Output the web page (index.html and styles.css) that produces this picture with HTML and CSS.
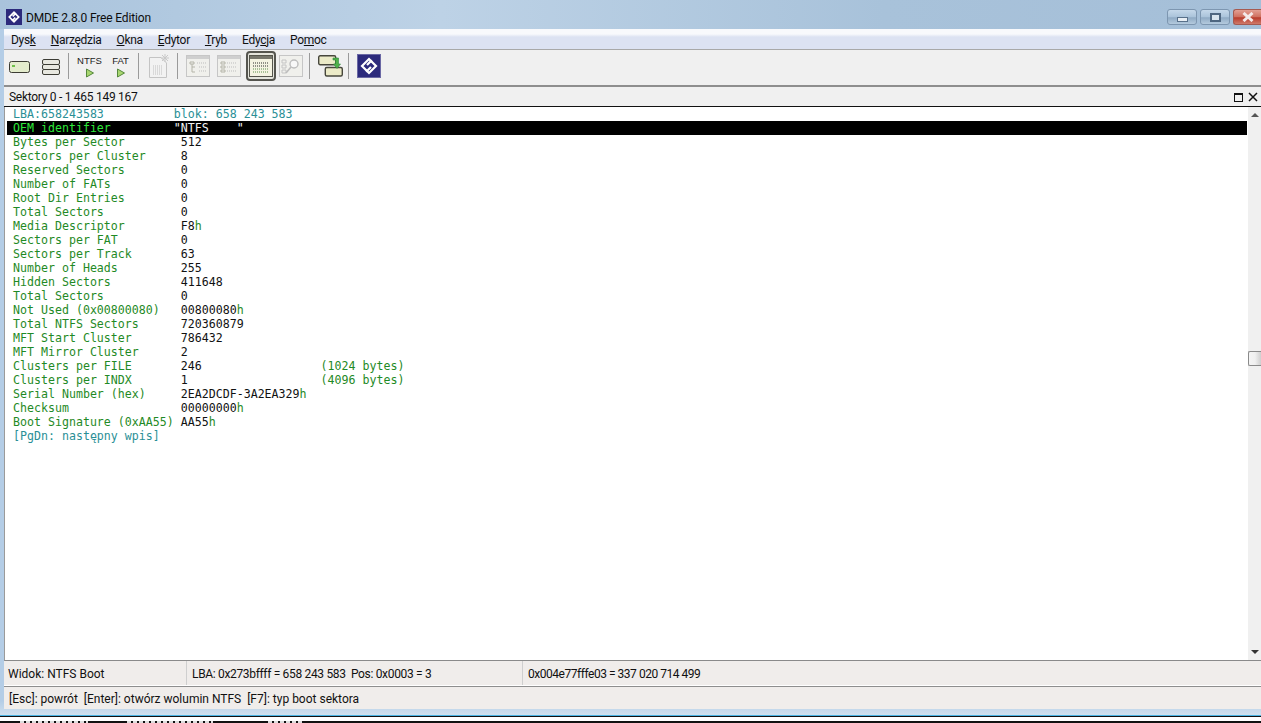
FILE: index.html
```html
<!DOCTYPE html>
<html lang="pl">
<head>
  <meta charset="UTF-8" />
  <title>DMDE 2.8.0 Free Edition</title>
  <link rel="stylesheet" href="styles.css">
</head>
<body>
  <div class="window">

    <!-- Title bar -->
    <div class="titlebar">
      <div class="title-left">
        <svg class="app-icon" width="16" height="16" viewBox="0 0 24 24">
          <rect width="24" height="24" fill="#2c2a7c"/>
          <path d="M15 8 L12 5 L5 12 L10 17 L14 13" fill="none" stroke="#fff" stroke-width="2.6"/>
          <path d="M9 16 L12 19 L19 12 L14 7 L10 11" fill="none" stroke="#fff" stroke-width="2.6"/>
        </svg>
        <span class="title-text">DMDE 2.8.0 Free Edition</span>
      </div>
      <div class="win-buttons">
        <div class="win-btn"><span class="min-glyph"></span></div>
        <div class="win-btn"><span class="max-glyph"></span></div>
        <div class="win-btn close">
          <svg width="14" height="10" viewBox="0 0 14 10"><path d="M2.5 1 L11.5 9 M11.5 1 L2.5 9" stroke="#f4eaea" stroke-width="3"/></svg>
        </div>
      </div>
    </div>

    <!-- Menu -->
    <div class="menubar">
      <span>Dys<u>k</u></span>
      <span><u>N</u>arzędzia</span>
      <span><u>O</u>kna</span>
      <span><u>E</u>dytor</span>
      <span><u>T</u>ryb</span>
      <span>Edy<u>c</u>ja</span>
      <span>Po<u>m</u>oc</span>
    </div>

    <!-- Toolbar -->
    <div class="toolbar">
      <div class="tool tool-disk">
        <svg width="22" height="13" viewBox="0 0 22 13">
          <rect x="0.5" y="0.5" width="20" height="11" rx="2" fill="#e4eccd" stroke="#3c3c34"/>
          <rect x="3" y="4" width="3" height="2" fill="#6fc24a"/>
        </svg>
      </div>
      <div class="tool tool-disk">
        <svg width="20" height="17" viewBox="0 0 20 17">
          <rect x="1.5" y="0.5" width="17" height="5" rx="1.5" fill="#e8e8e0" stroke="#3c3c34"/>
          <rect x="1.5" y="5.5" width="17" height="5" rx="1.5" fill="#e8e8e0" stroke="#3c3c34"/>
          <rect x="1.5" y="10.5" width="17" height="5" rx="1.5" fill="#e8e8e0" stroke="#3c3c34"/>
        </svg>
      </div>
      <div class="sep"></div>
      <div class="tool tool-text">
        <span>NTFS</span>
        <svg width="10" height="10" viewBox="0 0 10 10"><path d="M1.5 1 L8.5 5 L1.5 9 Z" fill="#a8d670" stroke="#55883c"/></svg>
      </div>
      <div class="tool tool-text">
        <span>FAT</span>
        <svg width="10" height="10" viewBox="0 0 10 10"><path d="M1.5 1 L8.5 5 L1.5 9 Z" fill="#a8d670" stroke="#55883c"/></svg>
      </div>
      <div class="sep"></div>
      <div class="tool tool-faded">
        <svg width="22" height="24" viewBox="0 0 22 24">
          <path d="M1.5 3.5 H13 L18.5 9 V23.5 H1.5 Z" fill="#f2f2f2" stroke="#c4c4c4"/>
          <path d="M17 0 V8 M13 4 H21 M14 1 L20 7 M20 1 L14 7" stroke="#c8c8c8"/>
          <path d="M5 12 H15 M5 14 H15 M5 16 H15 M5 18 H15 M5 20 H15" stroke="#c0c0c0" stroke-dasharray="1 1"/>
        </svg>
      </div>
      <div class="sep"></div>
      <div class="tool tool-view">
        <svg width="24" height="22" viewBox="0 0 24 22">
          <rect x="0.5" y="0.5" width="23" height="21" fill="#f0f0ec" stroke="#c6c6c6"/>
          <rect x="1" y="1" width="22" height="3" fill="#cfcfcf"/>
          <path d="M4 7 H8 V9 H4 Z M6 9 V17 M6 12 H9 M6 17 H9" stroke="#b4b4a8" fill="none"/>
          <path d="M11 8 H20 M13 12 H20 M13 16 H20" stroke="#bdbdbd" stroke-dasharray="1 1"/>
        </svg>
      </div>
      <div class="tool tool-view">
        <svg width="24" height="22" viewBox="0 0 24 22">
          <rect x="0.5" y="0.5" width="23" height="21" fill="#f0f0ec" stroke="#c6c6c6"/>
          <rect x="1" y="1" width="22" height="3" fill="#cfcfcf"/>
          <path d="M4 7 H8 V9 H4 Z M4 11 H8 V13 H4 Z M4 15 H8 V17 H4 Z" fill="none" stroke="#b4b4a8"/>
          <path d="M10 8 H20 M10 12 H20 M10 16 H20" stroke="#bdbdbd" stroke-dasharray="1 1"/>
        </svg>
      </div>
      <div class="tool tool-view active">
        <svg width="24" height="22" viewBox="0 0 24 22">
          <rect x="0.5" y="0.5" width="23" height="21" fill="#f4f3e2" stroke="#55554c"/>
          <rect x="1" y="1" width="22" height="3" fill="#76766c"/>
          <path d="M4 8 H20 M4 11 H20" stroke="#2c2c2c" stroke-dasharray="1 1"/>
          <path d="M4 14 H20 M4 17 H20" stroke="#5d8f4a" stroke-dasharray="1 1"/>
        </svg>
      </div>
      <div class="tool tool-view">
        <svg width="24" height="22" viewBox="0 0 24 22">
          <rect x="0.5" y="0.5" width="23" height="21" fill="#f0f0ec" stroke="#c6c6c6"/>
          <path d="M3 5 H7 V8 H3 Z M3 10 H7 V13 H3 Z M3 15 H7 V18 H3 Z" fill="none" stroke="#c4c4c4"/>
          <circle cx="15" cy="9" r="4" fill="#f8f8f8" stroke="#bdbdbd" stroke-width="1.4"/>
          <path d="M12 12 L7 18" stroke="#bdbdbd" stroke-width="1.6"/>
        </svg>
      </div>
      <div class="sep"></div>
      <div class="tool tool-copy">
        <svg width="25" height="22" viewBox="0 0 25 22">
          <rect x="0.7" y="0.7" width="17" height="9" rx="1.5" fill="#ecebc8" stroke="#47473c" stroke-width="1.4"/>
          <rect x="7.3" y="12.5" width="17" height="8.5" rx="1.5" fill="#ecebc8" stroke="#47473c" stroke-width="1.4"/>
          <path d="M15 3 H20.5 V9 H22.5 L19 13.5 L15.5 9 H17.5 V5 H15 Z" fill="#4fb04a" stroke="#2d8a3a" stroke-width="0.6"/>
        </svg>
      </div>
      <div class="sep"></div>
      <div class="tool tool-logo">
        <svg width="24" height="24" viewBox="0 0 24 24">
          <rect x="0.5" y="0.5" width="23" height="23" fill="#2c2a7c" stroke="#6a68a4"/>
          <path d="M15 8 L12 5 L5 12 L10 17 L14 13" fill="none" stroke="#fff" stroke-width="2.2"/>
          <path d="M9 16 L12 19 L19 12 L14 7 L10 11" fill="none" stroke="#fff" stroke-width="2.2"/>
        </svg>
      </div>
    </div>

    <!-- Panel header -->
    <div class="panel-head">
      <span class="panel-title">Sektory 0 - 1 465 149 167</span>
      <div class="panel-icons">
        <span class="panel-max"></span>
        <svg width="10" height="10" viewBox="0 0 10 10"><path d="M1 1 L9 9 M9 1 L1 9" stroke="#111" stroke-width="1.5"/></svg>
      </div>
    </div>

    <!-- Boot sector view -->
    <div class="panel-body">
      <div class="sector-view">
        <div class="row info">LBA:658243583          blok: 658 243 583</div>
        <div class="row selected">OEM identifier         <b>"NTFS    "</b></div>
        <div class="row"><i>Bytes per Sector        </i>512</div>
        <div class="row"><i>Sectors per Cluster     </i>8</div>
        <div class="row"><i>Reserved Sectors        </i>0</div>
        <div class="row"><i>Number of FATs          </i>0</div>
        <div class="row"><i>Root Dir Entries        </i>0</div>
        <div class="row"><i>Total Sectors           </i>0</div>
        <div class="row"><i>Media Descriptor        </i>F8<i>h</i></div>
        <div class="row"><i>Sectors per FAT         </i>0</div>
        <div class="row"><i>Sectors per Track       </i>63</div>
        <div class="row"><i>Number of Heads         </i>255</div>
        <div class="row"><i>Hidden Sectors          </i>411648</div>
        <div class="row"><i>Total Sectors           </i>0</div>
        <div class="row"><i>Not Used (0x00800080)   </i>00800080<i>h</i></div>
        <div class="row"><i>Total NTFS Sectors      </i>720360879</div>
        <div class="row"><i>MFT Start Cluster       </i>786432</div>
        <div class="row"><i>MFT Mirror Cluster      </i>2</div>
        <div class="row"><i>Clusters per FILE       </i>246                 <i>(1024 bytes)</i></div>
        <div class="row"><i>Clusters per INDX       </i>1                   <i>(4096 bytes)</i></div>
        <div class="row"><i>Serial Number (hex)     </i>2EA2DCDF-3A2EA329<i>h</i></div>
        <div class="row"><i>Checksum                </i>00000000<i>h</i></div>
        <div class="row"><i>Boot Signature (0xAA55) </i>AA55<i>h</i></div>
        <div class="row info">[PgDn: następny wpis]</div>
      </div>
      <div class="scrollbar">
        <div class="arrow-up"></div>
        <div class="track"><div class="thumb"></div></div>
        <div class="arrow-down"></div>
      </div>
    </div>

    <!-- Status -->
    <div class="statusbar">
      <div class="cell cell-view">Widok: NTFS Boot</div>
      <div class="cell cell-lba">LBA: 0x273bffff = 658 243 583  Pos: 0x0003 = 3</div>
      <div class="cell cell-offset">0x004e77fffe03 = 337 020 714 499</div>
    </div>
    <div class="hintbar">[Esc]: powrót  [Enter]: otwórz wolumin NTFS  [F7]: typ boot sektora</div>
  </div>

  <!-- Bottom edge of whatever sits behind the window -->
  <div class="desk-edge">
    <div class="desk-row">
      <span class="frag frag-a"></span>
      <span class="frag frag-b"></span>
      <span class="frag frag-c"></span>
    </div>
  </div>
</body>
</html>
```

FILE: styles.css
```css
* {
  box-sizing: border-box;
}

html, body {
  height: 100%;
}

body {
  margin: 0;
  overflow: hidden;
  display: flex;
  flex-direction: column;
  font-family: Roboto, "Open Sans", sans-serif;
  font-size: 12px;
  color: #111;
  background: #fff;
}

.window {
  height: 716px;
  flex-shrink: 0;
  display: flex;
  flex-direction: column;
  background: linear-gradient(#b4cde6 98%, #cfe0ee);
  padding: 0 0 6px 4px;
  border-bottom: 1px solid #4ab4e4;
}

.titlebar {
  height: 29px;
  flex-shrink: 0;
  margin-left: -4px;
  padding: 0 0 0 6px;
  display: flex;
  justify-content: space-between;
  align-items: flex-start;
  background: linear-gradient(90deg, #a9c3dc, #bdd2e6 35%, #a8c2da 70%, #a5bfd8);
}

.title-left {
  display: flex;
  align-items: center;
  gap: 4px;
  height: 29px;
  padding-top: 5px;
  letter-spacing: -0.15px;
  color: #0d0d0d;
}

.title-text {
  padding-top: 2px;
}

.win-buttons {
  display: flex;
  gap: 3px;
  padding-top: 9px;
}

.win-btn {
  width: 30px;
  height: 16px;
  border: 1px solid #7d96b0;
  border-radius: 3px;
  display: flex;
  align-items: center;
  justify-content: center;
  background: linear-gradient(#c5d8ea, #aac3da 50%, #8faac4 55%, #b4cade);
}

.win-btn.close {
  width: 28px;
  border-color: #a65a50;
  border-right: 0;
  border-radius: 3px 0 0 3px;
  background: linear-gradient(#e2a094, #cf6f5e 50%, #b83c2c 55%, #cf7a6a);
}

.min-glyph {
  display: block;
  width: 11px;
  height: 5px;
  margin-top: 4px;
  background: #e8eef4;
  border: 1px solid #58708a;
}

.max-glyph {
  display: block;
  width: 11px;
  height: 9px;
  background: #d8e4ee;
  border: 2px solid #4e6680;
}

.menubar {
  height: 21px;
  flex-shrink: 0;
  padding: 1px 0 0 7px;
  display: flex;
  align-items: center;
  gap: 15px;
  letter-spacing: -0.3px;
  background: linear-gradient(#f8f9fc 25%, #dce2f2 40%, #dce2f2);
  border-bottom: 1px solid #a8a8a8;
}

.toolbar {
  height: 37px;
  flex-shrink: 0;
  padding-bottom: 3px;
  display: flex;
  align-items: center;
  background: #f0f0f0;
  border-bottom: 2px solid #8e8e8e;
}

.tool {
  display: flex;
  align-items: center;
  justify-content: center;
  flex-direction: column;
  flex-shrink: 0;
}

.tool-disk {
  width: 31px;
  height: 30px;
  padding-top: 3px;
}

.tool-text {
  width: 31px;
  font-family: "Liberation Sans", sans-serif;
  font-size: 9.5px;
  line-height: 11px;
  color: #222;
  margin-top: 1px;
}

.tool-text svg {
  margin-top: 2px;
}

.sep {
  width: 1px;
  height: 26px;
  margin: 0 5px 0 2px;
  background: #9a9a9a;
}

.tool-faded {
  width: 30px;
  margin-right: 1px;
}

.tool-view {
  width: 30px;
  height: 30px;
  margin-right: 1px;
}

.tool-view.active {
  margin: 0 0 0 1px;
  border: 2px solid #55554f;
  border-radius: 4px;
  background: #e4e4dc;
}

.tool-copy {
  width: 31px;
}

.tool-logo {
  width: 30px;
}

.panel-head {
  height: 20px;
  flex-shrink: 0;
  padding: 1px 3px 0 5px;
  display: flex;
  align-items: center;
  justify-content: space-between;
  background: #f0f0f0;
  border-bottom: 1px solid #111;
}

.panel-title {
  letter-spacing: -0.28px;
}

.panel-icons {
  display: flex;
  align-items: center;
  gap: 5px;
}

.panel-max {
  display: block;
  width: 9px;
  height: 9px;
  border: 1px solid #111;
  border-top-width: 2px;
}

.panel-body {
  flex: 1;
  min-height: 0;
  display: flex;
  background: #fff;
  border-left: 1px solid #9a9a9a;
  border-bottom: 1px solid #8a8a8a;
}

.sector-view {
  flex: 1;
  padding-left: 2px;
  font-family: "DejaVu Sans Mono", monospace;
  font-size: 11.62px;
  line-height: 14px;
  color: #111;
}

.row {
  height: 14px;
  padding-left: 6px;
  white-space: pre;
}

.row i {
  font-style: normal;
  color: #1f8a26;
}

.row.info {
  color: #2a8f96;
}

.row.selected {
  background: #000;
  color: #2ee83a;
}

.row.selected b {
  font-weight: normal;
  color: #f4f4f4;
}

.scrollbar {
  width: 13px;
  margin-left: 1px;
  flex-shrink: 0;
  display: flex;
  flex-direction: column;
  background: #f0f0f0;
}

.arrow-up, .arrow-down {
  height: 16px;
  flex-shrink: 0;
  display: flex;
  align-items: center;
  justify-content: center;
}

.arrow-up::before {
  content: "";
  border: 4px solid transparent;
  border-top: 0;
  border-bottom: 4px solid #555;
}

.arrow-down::before {
  content: "";
  border: 4px solid transparent;
  border-bottom: 0;
  border-top: 4px solid #333;
}

.track {
  flex: 1;
  padding-top: 228px;
}

.thumb {
  height: 15px;
  border: 1px solid #8a8a8a;
  border-right: 0;
  border-radius: 2px 0 0 2px;
  background: linear-gradient(90deg, #f4f4f4, #f0f0f0 50%, #cfcfcf);
}

.statusbar {
  height: 25px;
  flex-shrink: 0;
  display: flex;
  align-items: center;
  background: #f0edeb;
  border-bottom: 1px solid #fff;
}

.cell {
  height: 100%;
  padding: 1px 0 0 5px;
  display: flex;
  align-items: center;
  white-space: pre;
}

.cell-view {
  width: 183px;
  padding-left: 4px;
  border-right: 1px solid #cfcfcf;
}

.cell-lba {
  width: 336px;
  letter-spacing: -0.33px;
  border-right: 1px solid #cfcfcf;
}

.cell-offset {
  letter-spacing: -0.47px;
}

.hintbar {
  height: 23px;
  flex-shrink: 0;
  padding: 2px 0 0 5px;
  display: flex;
  align-items: center;
  white-space: pre;
  background: #f0edeb;
  border-top: 1px solid #8e8e8e;
}

.desk-edge {
  flex: 1;
  display: flex;
  flex-direction: column;
  justify-content: flex-end;
  border-top: 1px solid #111;
}

.desk-row {
  height: 2px;
  display: flex;
  background: #111;
}

.frag {
  display: block;
  background: repeating-linear-gradient(90deg, #ddd 0 4px, #111 4px 6px);
}

.frag-a {
  width: 68px;
  margin-left: 20px;
}

.frag-b {
  width: 86px;
  margin-left: 39px;
}

.frag-c {
  width: 34px;
  margin-left: 55px;
}
```
